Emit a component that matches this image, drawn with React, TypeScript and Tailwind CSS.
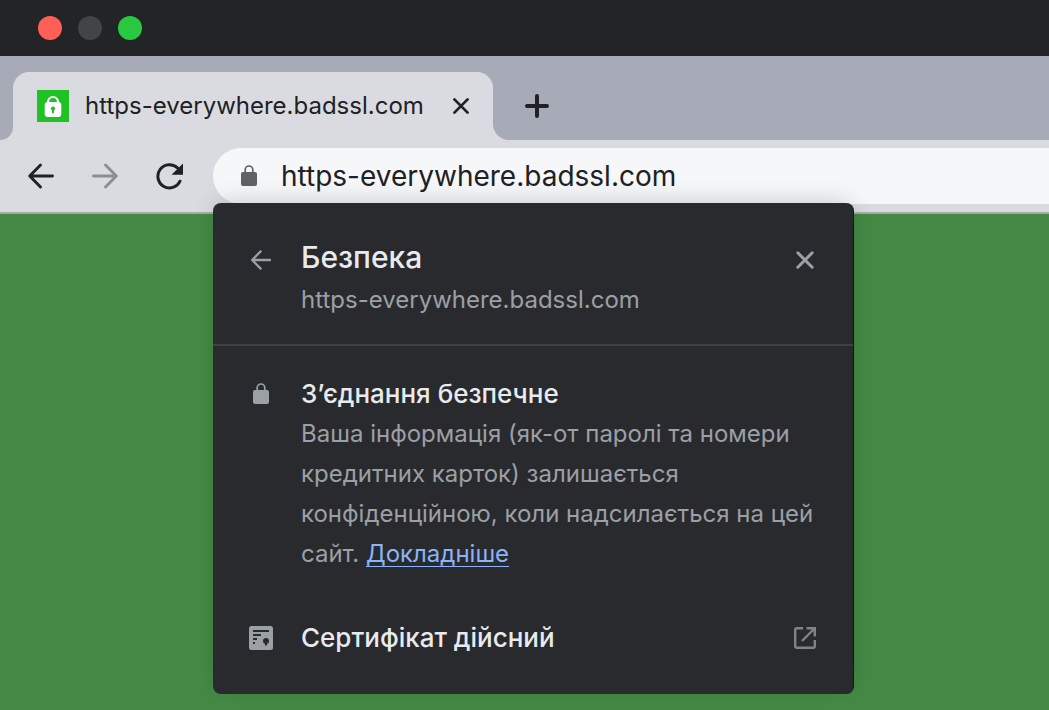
import React, { useState } from "react";

const HOST = "https-everywhere.badssl.com";

const LockIcon = ({ className }: { className?: string }) => (
  <svg viewBox="0 0 16 22" className={className} aria-hidden="true">
    <path d="M4.200 9V4.800a3.800 3.800 0 0 1 7.600 0V9" fill="none" stroke="currentColor" strokeWidth="1.700" />
    <rect x="0" y="7" width="16" height="14" rx="2" fill="currentColor" />
  </svg>
);

const Favicon = () => (
  <svg viewBox="0 0 32 32" className="size-8 shrink-0" aria-hidden="true">
    <rect width="32" height="32" fill="#1fc124" />
    <path d="M11 14v-2a5 5 0 0 1 10 0v2" fill="none" stroke="#fff" strokeWidth="2.200" />
    <rect x="7.700" y="12" width="16.600" height="15" rx="3" fill="#fff" />
    <circle cx="16" cy="18.500" r="2.100" fill="#1fc124" />
    <path d="M15 18.500h2V23h-2z" fill="#1fc124" />
  </svg>
);

const ArrowIcon = ({ className }: { className?: string }) => (
  <svg viewBox="0 0 28 28" className={className} fill="none" stroke="currentColor" strokeWidth="2.900" strokeLinecap="round" strokeLinejoin="round" aria-hidden="true">
    <path d="M25.500 14H3M13.500 3 2.700 14l10.800 11" />
  </svg>
);

const CrossIcon = ({ className }: { className?: string }) => (
  <svg viewBox="0 0 24 24" className={className} fill="none" stroke="currentColor" strokeWidth="3" strokeLinecap="round" aria-hidden="true">
    <path d="M4.800 4.800l14.400 14.400M19.200 4.800l-14.400 14.400" />
  </svg>
);

const ReloadIcon = () => (
  <svg viewBox="0 0 28 28" className="size-7" aria-hidden="true">
    <path d="M25 19.200A11.600 11.600 0 1 1 22.600 6" fill="none" stroke="currentColor" strokeWidth="3" strokeLinecap="round" />
    <path d="M28 1.500v11.200H16.500z" fill="currentColor" />
  </svg>
);

const CertificateIcon = () => (
  <svg viewBox="0 0 24 24" className="size-6" aria-hidden="true">
    <rect width="24" height="24" rx="2.500" fill="#9aa0a6" />
    <path d="M4 5h16M4 9h8M4 13h4M4 17h2" stroke="#292a2d" strokeWidth="2" />
    <circle cx="17" cy="15" r="3" fill="#292a2d" />
    <path d="M16 15h2v4l-1 1-1-1z" fill="#292a2d" />
  </svg>
);

const ExternalIcon = () => (
  <svg viewBox="0 0 24 24" className="size-6 text-[#808488]" fill="none" stroke="currentColor" strokeWidth="2.400" aria-hidden="true">
    <path d="M10 2.200H3.700a1.500 1.500 0 0 0-1.500 1.500v16.600a1.500 1.500 0 0 0 1.500 1.500h16.600a1.500 1.500 0 0 0 1.500-1.500V14" />
    <path d="M13.500 2.200h8.300v8.300M21.500 2.500 9 15" />
  </svg>
);

const TabStrip = () => (
  <div className="flex items-end bg-[#a7abb7] pt-4">
    {/* curved feet on both sides of the active tab */}
    <div className="h-4 w-[13px] bg-[#dadbe0]">
      <div className="h-full rounded-br-2xl bg-[#a7abb7]"></div>
    </div>
    <div className="flex h-17 w-120 items-center rounded-t-2xl bg-[#dadbe0] pl-6 pr-5">
      <Favicon />
      <span className="ml-4 grow text-2xl text-[#202124]">{HOST}</span>
      <button aria-label="Закрити вкладку" className="flex size-6 items-center justify-center text-[#202124]">
        <CrossIcon className="size-[22px]" />
      </button>
    </div>
    <div className="size-4 bg-[#dadbe0]">
      <div className="h-full rounded-bl-2xl bg-[#a7abb7]"></div>
    </div>
    <button aria-label="Нова вкладка" className="mb-[22px] ml-4 text-[#202124]">
      <svg viewBox="0 0 24 24" className="size-6" stroke="currentColor" strokeWidth="4" strokeLinecap="round">
        <path d="M12 2v20M2 12h20" />
      </svg>
    </button>
  </div>
);

const SecurityPopover = ({ onClose }: { onClose: () => void }) => (
  <div role="dialog" aria-labelledby="security-title" className="absolute left-0 top-full z-10 -mt-px w-[641px] rounded-lg border-r border-[#151617] bg-[#292a2d] text-[#9aa0a6] shadow-[0_-4px_24px_-4px_rgba(0,0,0,0.2)]">
    <div className="flex gap-7 border-b-2 border-[#3f4044] px-9 pb-6 pt-9">
      <button aria-label="Назад" className="mt-[9px] flex size-6 shrink-0 items-center justify-center">
        <ArrowIcon className="size-[22px]" />
      </button>
      <div className="grow">
        <h1 id="security-title" className="text-3xl leading-9 font-medium text-[#e8eaed]">Безпека</h1>
        <p className="mt-[5px] text-2xl leading-10">{HOST}</p>
      </div>
      <button aria-label="Закрити" onClick={onClose} className="mt-[9px] size-6 shrink-0">
        <CrossIcon className="size-6" />
      </button>
    </div>
    <div className="flex gap-7 px-9 pt-7">
      <div className="flex h-10 w-6 shrink-0 items-center justify-center">
        <LockIcon className="h-[22px] w-4" />
      </div>
      <div>
        <h2 className="text-[26px] leading-10 font-medium text-[#e8eaed]">З’єднання безпечне</h2>
        <p className="text-2xl leading-10">
          Ваша інформація (як-от паролі та номери кредитних карток) залишається конфіденційною, коли надсилається на цей сайт.{" "}
          <a href="#more" className="text-[#8ab4f8] underline decoration-1 underline-offset-4">Докладніше</a>
        </p>
      </div>
    </div>
    <a href="#certificate" className="mt-8 flex items-center gap-7 px-9 pb-9 pt-3">
      <CertificateIcon />
      <span className="grow text-[26px] leading-10 font-medium text-[#e8eaed]">Сертифікат дійсний</span>
      <ExternalIcon />
    </a>
  </div>
);

const App = () => {
  const [open, setOpen] = useState(true);

  return (
    <div className="flex min-h-screen flex-col overflow-hidden bg-[#448a45] font-['Inter','Liberation_Sans',sans-serif]">
      <div className="flex h-14 items-center gap-4 bg-[#222425] px-[38px]">
        <button aria-label="Закрити вікно" className="size-6 rounded-full bg-[#ff5f57]"></button>
        <button aria-label="Згорнути" className="size-6 rounded-full bg-[#434446]"></button>
        <button aria-label="Розгорнути" className="size-6 rounded-full bg-[#28c840]"></button>
      </div>
      <TabStrip />
      <div className="flex items-center border-b-2 border-[#a9abae] bg-[#dadbe0] py-2 pl-[27px] text-[#202124]">
        <div className="flex w-[186px] shrink-0 gap-9">
          <button aria-label="Назад"><ArrowIcon className="size-7" /></button>
          <button aria-label="Вперед" className="text-[#8b8d92]"><ArrowIcon className="size-7 rotate-180" /></button>
          <button aria-label="Оновити"><ReloadIcon /></button>
        </div>
        <div className="relative min-w-0 grow">
          <div className="flex h-14 items-center rounded-l-full bg-[#f6f7f9] pl-7">
            <button aria-label="Відомості про сайт" onClick={() => setOpen(!open)} className="text-[#5f6368]">
              <LockIcon className="h-[22px] w-4" />
            </button>
            <input aria-label="Адресний рядок" defaultValue={HOST} className="ml-6 min-w-0 grow bg-transparent text-[28px] outline-none" />
          </div>
          {open && <SecurityPopover onClose={() => setOpen(false)} />}
        </div>
      </div>
    </div>
  );
};

export default App;
